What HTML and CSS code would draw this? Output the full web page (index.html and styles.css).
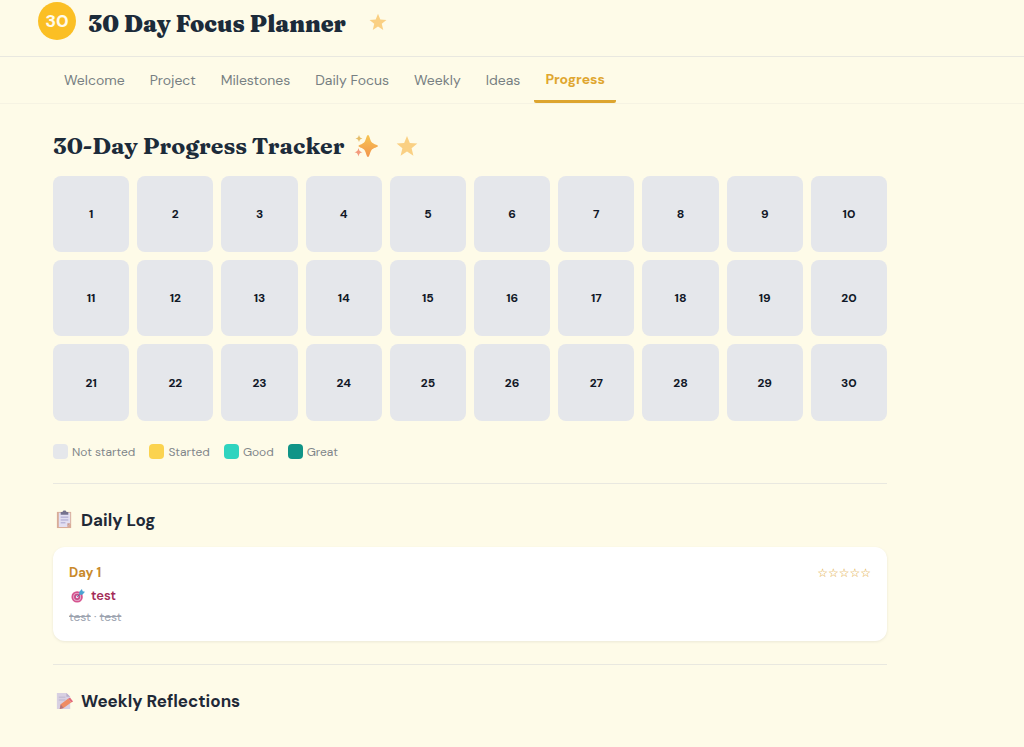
FILE: index.html
```html
<!DOCTYPE html>
<html lang="en">
<head>
    <meta charset="UTF-8">
    <meta name="viewport" content="width=device-width, initial-scale=1.0">
    <title>30 Day Focus Planner</title>
    <link rel="stylesheet" href="styles.css">
</head>
<body>
    <header class="header">
        <div class="logo">30</div>
        <h1>30 Day Focus Planner</h1>
        <svg class="star header-star" viewBox="0 0 24 24" aria-hidden="true"><path d="M12 1l3.100 7.600 8.200.6-6.300 5.200 2 8.100-7-4.500-7 4.500 2-8.100L.7 9.200l8.200-.6z"/></svg>
    </header>

    <nav class="tabs">
        <a href="#welcome">Welcome</a>
        <a href="#project">Project</a>
        <a href="#milestones">Milestones</a>
        <a href="#daily">Daily Focus</a>
        <a href="#weekly">Weekly</a>
        <a href="#ideas">Ideas</a>
        <a href="#progress" class="active">Progress</a>
    </nav>

    <main class="container">
        <div class="title-row">
            <h2>30-Day Progress Tracker</h2>
            <svg class="sparkles" viewBox="0 0 24 24" aria-hidden="true">
                <defs>
                    <linearGradient id="spark" x1="0" y1="0" x2="0" y2="1">
                        <stop offset="0" stop-color="#f7c552"/>
                        <stop offset="1" stop-color="#f2954d"/>
                    </linearGradient>
                </defs>
                <path fill="url(#spark)" d="M14 1c1.500 0 2 5 3.500 7S24 11 24 12s-5 2-6.500 4-2 7-3.500 7-2-5-3.500-7-6-3-6-4 4.500-2 6-4 2-7 3.500-7z"/>
                <path fill="#e5bd69" d="M5 1c.8 2.400 1.200 2.800 3.500 3.500C6.200 5.200 5.800 5.600 5 8c-.8-2.400-1.200-2.800-3.500-3.500C3.800 3.800 4.200 3.400 5 1z"/>
                <path fill="#f39a7c" d="M4.500 14c.8 3 1.300 3.500 4 4.200-2.700.7-3.200 1.200-4 4.300-.8-3.100-1.300-3.600-4-4.300 2.700-.7 3.200-1.200 4-4.200z"/>
            </svg>
            <svg class="star" viewBox="0 0 24 24" aria-hidden="true"><path d="M12 1l3.100 7.600 8.200.6-6.300 5.200 2 8.100-7-4.500-7 4.500 2-8.100L.7 9.200l8.200-.6z"/></svg>
        </div>

        <div class="grid" id="grid">
            <button>1</button><button>2</button><button>3</button><button>4</button><button>5</button>
            <button>6</button><button>7</button><button>8</button><button>9</button><button>10</button>
            <button>11</button><button>12</button><button>13</button><button>14</button><button>15</button>
            <button>16</button><button>17</button><button>18</button><button>19</button><button>20</button>
            <button>21</button><button>22</button><button>23</button><button>24</button><button>25</button>
            <button>26</button><button>27</button><button>28</button><button>29</button><button>30</button>
        </div>

        <div class="legend">
            <div class="legend-item"><span class="swatch"></span>Not started</div>
            <div class="legend-item"><span class="swatch started"></span>Started</div>
            <div class="legend-item"><span class="swatch good"></span>Good</div>
            <div class="legend-item"><span class="swatch great"></span>Great</div>
        </div>

        <section class="section">
            <h3>
                <svg class="icon" viewBox="0 0 20 20" aria-hidden="true">
                    <path fill="#d9ac98" d="M2 2h15v17H2z"/>
                    <path fill="#e3dff1" d="M4 3h12v11l-3 4H4z"/>
                    <path fill="#c99b90" d="M16 14l-3 4v-4z"/>
                    <path fill="#75728e" d="M6 2h2c0-2 4-2 4 0h2v3H6z"/>
                    <path stroke="#a3a0cb" d="M6 7.500h8M6 10.500h8M6 13.500h5"/>
                </svg>
                Daily Log
            </h3>
            <div class="log-card">
                <div class="log-head">
                    <span class="day">Day 1</span>
                    <span class="rating">☆☆☆☆☆</span>
                </div>
                <div class="focus">
                    <svg class="target" viewBox="0 0 16 16" aria-hidden="true">
                        <circle cx="7" cy="9" r="6.500" fill="#d6538e"/>
                        <circle cx="7" cy="9" r="4.500" fill="#e5b5d3"/>
                        <circle cx="7" cy="9" r="3.500" fill="#c94b86"/>
                        <circle cx="7" cy="9" r="1.500" fill="#eadcf0"/>
                        <path stroke="#536b9f" d="M7 9l5-5"/>
                        <path fill="#4aa3d3" d="M9.500 3l3-3 .8 2.500L16 3l-3 3.500h-3.500z"/>
                    </svg>
                    test
                </div>
                <div class="tasks"><s>test</s> · <s>test</s></div>
            </div>
        </section>

        <section class="section">
            <h3>
                <svg class="icon" viewBox="0 0 20 20" aria-hidden="true">
                    <path fill="#d8d0e2" d="M2 2h10l4 4v13H2z"/>
                    <path fill="#b9aecb" d="M12 2l4 4h-4z"/>
                    <path stroke="#bbb4cd" d="M4 6.500h7M4 9.500h7"/>
                    <path fill="#ef8b62" d="M6 14l8-6 3 4-8 6-4 1z"/>
                    <path fill="#e3697b" d="M14 8l2-1 3 4-2 1z"/>
                    <path fill="#b5747a" d="M6 14l3 4-4 1z"/>
                </svg>
                Weekly Reflections
            </h3>
        </section>
    </main>
</body>
</html>
```

FILE: styles.css
```css
* {
    box-sizing: border-box;
}

body {
    margin: 0;
    font-family: "DM Sans", Inter, sans-serif;
    background: #fefbe8;
    color: #1f2937;
}

h1, h2, h3 {
    margin: 0;
}

h1, h2 {
    font-family: Fraunces, "DejaVu Serif Condensed", "DejaVu Serif", serif;
    font-size: 23px;
    line-height: 32px;
    color: #1c2b3a;
}

h1 {
    font-weight: 900;
}

.header {
    display: flex;
    align-items: center;
    gap: 12px;
    padding: 2px 38px 14px;
    border-bottom: 1px solid #e9e8e0;
}

.header h1 {
    padding-top: 4px;
}

.logo {
    display: flex;
    align-items: center;
    justify-content: center;
    width: 38px;
    height: 38px;
    margin-bottom: 2px;
    border-radius: 50%;
    background: #fbbf24;
    color: #fffbeb;
    font-size: 18px;
    font-weight: 700;
}

.star {
    width: 22px;
    height: 22px;
    fill: #fad083;
}

.header-star {
    width: 18px;
    height: 18px;
    margin: 0 11px;
}

.tabs {
    display: flex;
    padding: 0 53px;
    gap: 3px;
    border-bottom: 1px solid #f6f3e3;
}

.tabs a {
    padding: 14px 11px;
    font-size: 14px;
    line-height: 18px;
    color: #777f82;
    text-decoration: none;
}

.tabs a.active {
    padding: 13px 11px 12px;
    border-bottom: 3px solid #dda52f;
    border-radius: 2px;
    color: #e0a62f;
    font-weight: 700;
}

.container {
    max-width: 940px;
    padding: 26px 53px;
}

.title-row {
    display: flex;
    align-items: center;
    margin-bottom: 14px;
}

.sparkles {
    width: 24px;
    height: 24px;
    margin: 0 18px 0 10px;
}

.grid {
    display: grid;
    grid-template-columns: repeat(10, 1fr);
    gap: 8px;
}

.grid button {
    aspect-ratio: 1;
    padding: 0;
    border: none;
    border-radius: 8px;
    background: #e5e7eb;
    color: #111827;
    font-family: inherit;
    font-size: 12px;
    font-weight: 700;
    cursor: pointer;
}

.legend {
    display: flex;
    gap: 14px;
    margin-top: 23px;
    font-size: 12px;
    line-height: 16px;
    color: #81868a;
}

.legend-item {
    display: flex;
    align-items: center;
    gap: 4px;
}

.swatch {
    width: 15px;
    height: 15px;
    border-radius: 4px;
    background: #e5e7eb;
}

.started {
    background: #fbd34f;
}

.good {
    background: #2fd4bf;
}

.great {
    background: #109487;
}

.section {
    margin-top: 23px;
    padding-top: 24px;
    border-top: 1px solid #e9e8e0;
}

.section h3 {
    display: flex;
    align-items: center;
    gap: 7px;
    padding-left: 2px;
    font-size: 17px;
    font-weight: 700;
    line-height: 24px;
}

.icon {
    width: 19px;
    height: 19px;
    fill: none;
}

.log-card {
    margin-top: 15px;
    padding: 16px;
    border-radius: 12px;
    background: #fff;
    box-shadow: 0 1px 3px rgba(0, 0, 0, 0.08);
}

.log-head {
    display: flex;
    align-items: center;
    justify-content: space-between;
    line-height: 20px;
}

.day {
    color: #c98a2b;
    font-size: 13px;
    font-weight: 700;
}

.rating {
    color: #e0a62f;
    font-family: "DejaVu Sans", sans-serif;
    font-size: 12px;
    font-weight: 700;
}

.focus {
    display: flex;
    align-items: center;
    gap: 6px;
    margin-top: 3px;
    padding-left: 2px;
    color: #a32c58;
    font-size: 13px;
    font-weight: 600;
    line-height: 20px;
}

.target {
    width: 14px;
    height: 14px;
}

.tasks {
    margin-top: 3px;
    color: #9ca3af;
    font-size: 12px;
    line-height: 16px;
}
```
